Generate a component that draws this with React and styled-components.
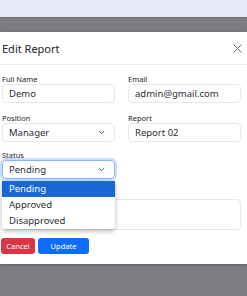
import React from "react";
import styled, { createGlobalStyle } from "styled-components";

const GlobalStyle = createGlobalStyle`
  html, body {
    margin: 0;
    padding: 0;
    background: #7b7d80;
  }
  body {
    font-family: "Noto Sans", "DejaVu Sans", sans-serif;
    color: #212529;
  }
`;

const options = ["Pending", "Approved", "Disapproved"];

function Chevron() {
  return (
    <svg width="7" height="5" viewBox="0 0 7 5" fill="none">
      <path d="M1 1.2l2.5 2.5 2.5-2.5" stroke="#495057" strokeWidth="1" />
    </svg>
  );
}

function App() {
  return (
    <Page>
      <GlobalStyle />
      <TopStrip />
      <Modal>
        <Header>
          <Title>Edit Report</Title>
          <CloseButton aria-label="close">
            <svg width="9" height="9" viewBox="0 0 9 9">
              <path d="M0.5 0.5l8 8M8.5 0.5l-8 8" stroke="#6c6c6c" strokeWidth="1" />
            </svg>
          </CloseButton>
        </Header>
        <Body>
          <Grid>
            <Field>
              <Label>Full Name</Label>
              <Input>Demo</Input>
            </Field>
            <Field>
              <Label>Email</Label>
              <Input>admin@gmail.com</Input>
            </Field>
            <Field>
              <Label>Position</Label>
              <Select>
                <span>Manager</span>
                <Chevron />
              </Select>
            </Field>
            <Field>
              <Label>Report</Label>
              <Input>Report 02</Input>
            </Field>
            <StatusField>
              <Label>Status</Label>
              <Select $focused>
                <span>Pending</span>
                <Chevron />
              </Select>
              <Dropdown>
                {options.map((o, i) => (
                  <Option key={o} $active={i === 0}>
                    {o}
                  </Option>
                ))}
              </Dropdown>
            </StatusField>
          </Grid>
          <WideField>
            <LabelSpace />
            <TextArea />
          </WideField>
          <Actions>
            <Button $variant="danger">Cancel</Button>
            <Button $variant="primary" $wide>
              Update
            </Button>
          </Actions>
        </Body>
      </Modal>
    </Page>
  );
}

const Page = styled.div`
  width: 247px;
  height: 296px;
  overflow: hidden;
  background: #7b7d80;
`;

const TopStrip = styled.div`
  height: 17px;
  background: #e6eaf8;
  border-bottom: 1px solid #6f7174;
  margin-bottom: 14px;
`;

const Modal = styled.div`
  background: #fff;
  box-shadow: 0 1px 3px rgba(0, 0, 0, 0.25);
`;

const Header = styled.div`
  height: 32px;
  display: flex;
  align-items: center;
  justify-content: space-between;
  padding: 0 5px 0 2px;
  border-bottom: 1px solid #e9ecef;
`;

const Title = styled.div`
  font-size: 11px;
  color: #212529;
  margin-top: 1px;
`;

const CloseButton = styled.div`
  display: flex;
  margin-top: 1px;
`;

const Body = styled.div`
  padding: 9px 6px 10px 2px;
`;

const Grid = styled.div`
  display: grid;
  grid-template-columns: 113px 113px;
  column-gap: 13px;
  row-gap: 10px;
`;

const Field = styled.div`
  display: flex;
  flex-direction: column;
`;

const StatusField = styled(Field)`
  position: relative;
  margin-top: -2px;
`;

const WideField = styled(Field)`
  margin-top: 10px;
`;

const Label = styled.div`
  font-size: 7.5px;
  line-height: 10px;
  color: #212529;
`;

const LabelSpace = styled.div`
  height: 10px;
`;

const Input = styled.div`
  box-sizing: border-box;
  height: 19px;
  border: 1px solid #e6e8eb;
  border-radius: 4px;
  padding: 0 6px;
  font-size: 9.5px;
  line-height: 17px;
  color: #2b2f33;
`;

const Select = styled(Input)`
  display: flex;
  align-items: center;
  justify-content: space-between;
  padding: 0 9px 0 6px;
  ${(p) =>
    p.$focused &&
    `
    border-color: #86b7fe;
    box-shadow: 0 0 0 2px rgba(13, 110, 253, 0.22);
  `}
`;

const Dropdown = styled.div`
  position: absolute;
  top: 100%;
  left: 0;
  width: 113px;
  margin-top: 2px;
  background: #fff;
  border-radius: 0 0 4px 4px;
  box-shadow: 0 2px 5px rgba(0, 0, 0, 0.3);
  overflow: hidden;
  z-index: 2;
`;

const Option = styled.div`
  height: 16px;
  line-height: 16px;
  padding: 0 7px;
  font-size: 9.5px;
  background: ${(p) => (p.$active ? "#1967d2" : "#fff")};
  color: ${(p) => (p.$active ? "#fff" : "#2b2f33")};
`;

const TextArea = styled.div`
  box-sizing: border-box;
  height: 31px;
  border: 1px solid #e6e8eb;
  border-radius: 4px;
`;

const Actions = styled.div`
  display: flex;
  gap: 3px;
  margin-top: 8px;
  margin-left: -1px;
`;

const Button = styled.div`
  box-sizing: border-box;
  height: 16px;
  width: ${(p) => (p.$wide ? "51px" : "34px")};
  border-radius: 3px;
  display: flex;
  align-items: center;
  justify-content: center;
  font-size: 7.5px;
  color: #fff;
  background: ${(p) => (p.$variant === "danger" ? "#dc3545" : "#0d6efd")};
`;

export default App;
